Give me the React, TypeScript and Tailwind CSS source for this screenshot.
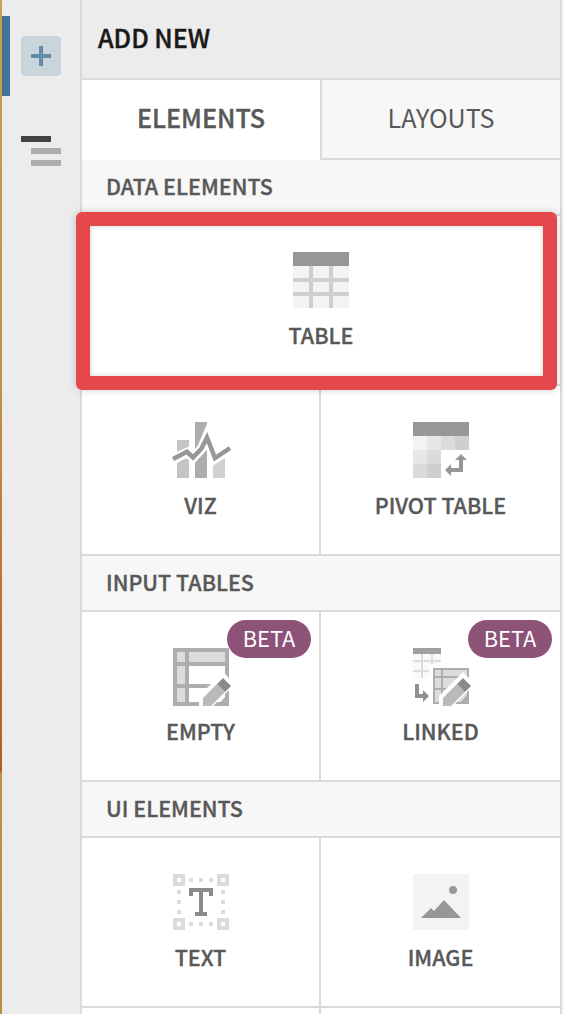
import type { ReactNode } from 'react'

function Glyph({ children }: { children: ReactNode }) {
  return (
    <svg className="block h-[60px] w-[60px] shrink-0" viewBox="-2 0 60 60" fill="none">
      {children}
    </svg>
  )
}

const TableIcon = () => (
  <Glyph>
    <path fill="#f3f3f3" d="M0 14h56v42H0z" />
    <path fill="#cfcfcf" d="M16 14h4v42h-4zM36 14h4v42h-4zM0 26h56v4H0zM0 40h56v4H0z" />
    <path fill="#979797" d="M0 0h56v14H0z" />
  </Glyph>
)

const VizIcon = () => (
  <Glyph>
    <path fill="#c4c4c4" d="M4 18h12v6.500L4 30zM4 41l9.500-5 2.500 2.500V56H4z" />
    <path fill="#adadad" d="M22 0h12v2L24.500 24l-2.500 3zM22 40.500l9.500-10L34 27.500V56H22z" />
    <path fill="#d0d0d0" d="M40 43.500L52 36v20H40z" />
    <path stroke="#979797" strokeWidth="4.500" d="M0 37L14 29.800L20 35.500L28.500 26.500L34 15.500L42 36L57 26" />
  </Glyph>
)

const PivotIcon = () => (
  <Glyph>
    <path fill="#979797" d="M0 0h56v14H0z" />
    <path fill="#f3f3f3" d="M0 14h14v14H0z" />
    <path fill="#e7e7e7" d="M14 14h14v14H14zM0 28h14v14H0z" />
    <path fill="#dbdbdb" d="M28 14h14v14H28zM14 28h14v14H14zM0 42h14v14H0z" />
    <path fill="#cfcfcf" d="M42 14h14v14H42zM14 42h14v14H14z" />
    <path fill="#979797" d="M48 32l6 6h-4v12H38v4l-6-6 6-6v4h8v-8h-4z" />
  </Glyph>
)

const EmptyIcon = () => (
  <Glyph>
    <path fill="#adadad" d="M0 0h56v58H0z" />
    <path fill="#dcdcdc" d="M4 4h8v10H4zM16 4h36v10H16zM4 18h8v18H4zM4 40h8v14H4z" />
    <path fill="#fff" d="M16 18h36v18H16zM16 40h36v14H16z" />
    <path fill="#fff" d="M26 60V48L50 24l12 12-24 24z" />
    <path fill="#adadad" d="M44 58l8-9 4-4v13z" />
    <path fill="#bababa" d="M30 58v-8l14-14 8 8-14 14z" />
    <path fill="#8a8a8a" d="M50 30l8 8-6 6-8-8z" />
  </Glyph>
)

const LinkedIcon = () => (
  <Glyph>
    <path fill="#f9f9f9" d="M0 6h28v24H0z" />
    <path fill="#dcdcdc" d="M8 6h2v24H8zM18 6h2v24h-2zM0 12h28v2H0zM0 22h28v2H0z" />
    <path fill="#a0a0a0" d="M0 0h28v6H0z" />
    <path fill="#fff" d="M16 16h16v16H16z" />
    <path fill="#8f8f8f" d="M2 36h4v10h4v-4l6 6-6 6v-4H2z" />
    <path fill="#adadad" d="M20 20h36v36H20z" />
    <path fill="#dcdcdc" d="M22 22h6v6h-6zM30 22h24v6H30zM22 30h6v10h-6zM30 30h24v10H30zM22 42h6v12h-6zM30 42h24v12H30z" />
    <path fill="#fff" d="M26 60V48L50 24l12 12-24 24z" />
    <path fill="#adadad" d="M46 56l8-9h2v9z" />
    <path fill="#bababa" d="M30 58v-8l14-14 8 8-14 14z" />
    <path fill="#8a8a8a" d="M50 30l8 8-6 6-8-8z" />
  </Glyph>
)

const TextIcon = () => (
  <Glyph>
    <path
      fill="#dcdcdc"
      fillRule="evenodd"
      d="M0 0h12v12H0zM4 4h4v4H4zM44 0h12v12H44zM48 4h4v4h-4zM0 44h12v12H0zM4 48h4v4H4zM44 44h12v12H44zM48 48h4v4h-4zM16 4h4v4h-4zM26 4h4v4h-4zM36 4h4v4h-4zM16 48h4v4h-4zM26 48h4v4h-4zM36 48h4v4h-4zM4 16h4v4H4zM4 26h4v4H4zM4 36h4v4H4zM48 16h4v4h-4zM48 26h4v4h-4zM48 36h4v4h-4z"
    />
    <path stroke="#8c8c8c" strokeWidth="4" d="M18 22V16H38V22M28 16V40M22 40H34" />
  </Glyph>
)

const ImageIcon = () => (
  <Glyph>
    <path fill="#f3f3f3" d="M0 0h56v56H0z" />
    <circle cx="40" cy="16" r="4" fill="#979797" />
    <path fill="#979797" d="M8 44l10-10 3 3 10-11 17 18z" />
  </Glyph>
)

function SectionTitle({ children }: { children: ReactNode }) {
  return (
    <h2 className="flex h-14 shrink-0 items-center border-b-2 border-[#dadada] bg-[#f7f7f7] pb-0.5 pl-6 text-[21.500px] leading-6 font-medium text-[#585858] [-webkit-text-stroke:0.35px_#585858]">
      {children}
    </h2>
  )
}

function Card({ icon, label, beta = false }: { icon: ReactNode; label: string; beta?: boolean }) {
  return (
    <button className="relative flex h-full flex-col items-center pt-9">
      {icon}
      <span className="mt-[11px] text-[21.500px] leading-6 font-medium text-[#585858] [-webkit-text-stroke:0.35px_#585858]">
        {label}
      </span>
      {beta && (
        <span className="absolute top-2 right-2 flex h-[38px] w-[84px] items-center justify-center rounded-full bg-[#8d5278] pb-0.5 text-[21.800px] leading-6 text-white">
          BETA
        </span>
      )}
    </button>
  )
}

function CardRow({ children }: { children?: ReactNode }) {
  return (
    <div className="grid h-[170px] shrink-0 grid-cols-[237px_239px] gap-x-0.5 border-b-2 border-[#dadada] bg-[linear-gradient(#dadada,#dadada)] bg-[length:2px_100%] bg-[position:237px_0] bg-no-repeat">
      {children}
    </div>
  )
}

export default function App() {
  return (
    <div className="flex h-[1014px] w-[564px] overflow-hidden bg-[#f7f7f7] font-['Noto_Sans_CJK_JP','Noto_Sans_CJK_SC',sans-serif]">
      <div className="w-0.5 shrink-0 bg-[linear-gradient(to_bottom,#c5a34a_0,#c0913e_400px,#bd6a30_650px,#b85c2a_772px,#b89440_773px,#bd8c3e_1014px)]" />
      <nav className="flex w-20 shrink-0 flex-col border-r-2 border-[#dadada] bg-[#ececec] pt-4">
        <div className="flex h-20 items-start border-l-8 border-[#407496] pt-5 pl-[11px]">
          <button aria-label="Add" className="flex size-10 items-center justify-center rounded bg-[#cad4db]">
            <svg className="size-5" viewBox="0 0 20 20">
              <path fill="#608daa" d="M8 0h4v8h8v4h-8v8H8v-8H0V8h8z" />
            </svg>
          </button>
        </div>
        <button aria-label="Outline" className="mt-10 ml-[19px] flex w-10 flex-col gap-1.5">
          <span className="h-1.5 w-[30px] bg-[#424242]" />
          <span className="ml-2.5 h-1.5 w-[30px] bg-[#adadad]" />
          <span className="ml-2.5 h-1.5 w-[30px] bg-[#adadad]" />
        </button>
      </nav>
      <main className="relative flex w-[480px] shrink-0 flex-col border-r-2 border-[#dadada] bg-white">
        <h1 className="flex h-20 shrink-0 items-center border-b-2 border-[#dadada] bg-[#ececec] pb-1 pl-4 text-[25.100px] leading-8 font-medium text-[#191919] [-webkit-text-stroke:0.4px_#191919]">
          ADD NEW
        </h1>
        <div className="grid h-20 shrink-0 grid-cols-[238px_240px] text-[25.100px] leading-8 text-[#585858]">
          <button className="flex items-center justify-center pb-1.5 font-medium [-webkit-text-stroke:0.4px_#585858]">
            ELEMENTS
          </button>
          <button className="flex items-center justify-center border-b-2 border-l-2 border-[#dadada] bg-[#f7f7f7] pb-1">
            LAYOUTS
          </button>
        </div>
        <SectionTitle>DATA ELEMENTS</SectionTitle>
        <div className="h-[170px] shrink-0 border-b-2 border-[#dadada] [&>button]:w-full">
          <Card icon={<TableIcon />} label="TABLE" />
        </div>
        <CardRow>
          <Card icon={<VizIcon />} label="VIZ" />
          <Card icon={<PivotIcon />} label="PIVOT TABLE" />
        </CardRow>
        <SectionTitle>INPUT TABLES</SectionTitle>
        <CardRow>
          <Card icon={<EmptyIcon />} label="EMPTY" beta />
          <Card icon={<LinkedIcon />} label="LINKED" beta />
        </CardRow>
        <SectionTitle>UI ELEMENTS</SectionTitle>
        <CardRow>
          <Card icon={<TextIcon />} label="TEXT" />
          <Card icon={<ImageIcon />} label="IMAGE" />
        </CardRow>
        <CardRow />
        <div className="pointer-events-none absolute top-[212px] -left-1.5 h-[178px] w-[481px] rounded-md border-[14px] border-[#e5484c] shadow-[0_0_8px_rgba(0,0,0,0.18),inset_0_0_5px_rgba(0,0,0,0.18)]" />
      </main>
    </div>
  )
}
